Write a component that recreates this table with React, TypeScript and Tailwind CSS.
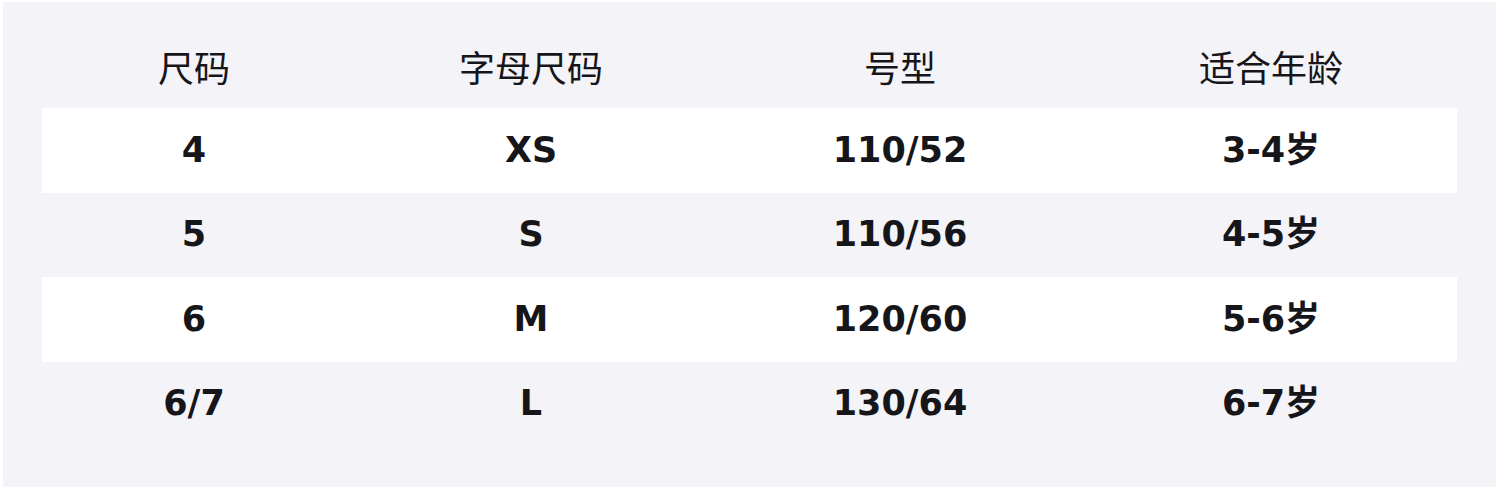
import React from "react";

const header = ["尺码", "字母尺码", "号型", "适合年龄"];
const rows = [
  ["4", "XS", "110/52", "3-4岁"],
  ["5", "S", "110/56", "4-5岁"],
  ["6", "M", "120/60", "5-6岁"],
  ["6/7", "L", "130/64", "6-7岁"],
];

export default function App() {
  return (
    <div className="w-[1500px] h-[490px] bg-white pl-[3px] pt-[2px]">
      <div
        className="w-[1493px] h-[485px] bg-[#f3f3f8] px-[39px] text-[#16161a]"
        style={{ fontFamily: '"DejaVu Sans", "Noto Sans CJK SC", sans-serif' }}
      >
        <div className="grid grid-cols-[304px_370px_368px_374px] h-[106px] pt-[22px] items-center">
          {header.map((h) => (
            <div
              key={h}
              className="text-center text-[36px] leading-[84px] font-normal"
              style={{ fontFamily: '"Noto Sans CJK SC", sans-serif' }}
            >
              {h}
            </div>
          ))}
        </div>
        {rows.map((r, i) => (
          <div
            key={i}
            className={`grid grid-cols-[304px_370px_368px_374px] h-[84.5px] items-center ${
              i % 2 === 0 ? "bg-white" : "bg-transparent"
            }`}
          >
            {r.map((c, j) => (
              <div key={j} className="text-center text-[35px] font-bold leading-none">
                {c}
              </div>
            ))}
          </div>
        ))}
      </div>
    </div>
  );
}
